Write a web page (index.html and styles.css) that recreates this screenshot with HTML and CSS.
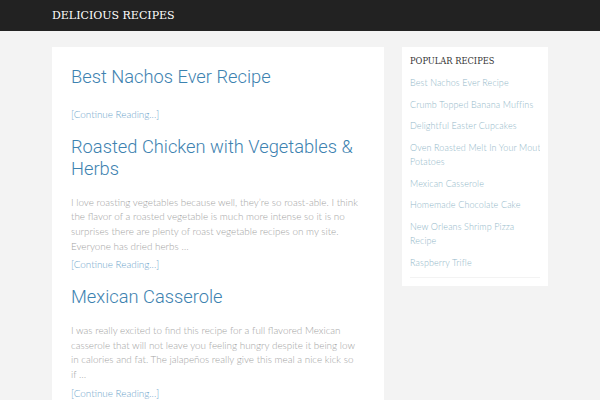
FILE: index.html
```html
<!DOCTYPE html>
<html lang="en">
<head>
    <meta charset="UTF-8">
    <title>Delicious Recipes</title>
    <link rel="stylesheet" href="styles.css">
</head>
<body>
<header class="site-header">
    <div class="wrap">
        <a class="site-title" href="#">DELICIOUS RECIPES</a>
    </div>
</header>

<div class="wrap layout">
    <main class="content">
        <article class="post post-short">
            <h2 class="post-title"><a href="#">Best Nachos Ever Recipe</a></h2>
            <a class="more" href="#">[Continue Reading...]</a>
        </article>

        <article class="post">
            <h2 class="post-title"><a href="#">Roasted Chicken with Vegetables &amp; Herbs</a></h2>
            <p>I love roasting vegetables because well, they&rsquo;re so roast-able. I think the flavor of a roasted vegetable is much more intense so it is no surprises there are plenty of roast vegetable recipes on my site. Everyone has dried herbs &hellip;</p>
            <a class="more" href="#">[Continue Reading...]</a>
        </article>

        <article class="post">
            <h2 class="post-title"><a href="#">Mexican Casserole</a></h2>
            <p>I was really excited to find this recipe for a full flavored Mexican casserole that will not leave you feeling hungry despite it being low in calories and fat. The jalapeños really give this meal a nice kick so if &hellip;</p>
            <a class="more" href="#">[Continue Reading...]</a>
        </article>
    </main>

    <aside class="sidebar">
        <h3 class="widget-title">POPULAR RECIPES</h3>
        <ul class="widget-list">
            <li><a href="#">Best Nachos Ever Recipe</a></li>
            <li><a href="#">Crumb Topped Banana Muffins</a></li>
            <li><a href="#">Delightful Easter Cupcakes</a></li>
            <li><a href="#"><span class="nowrap">Oven Roasted Melt In Your Mouth</span> Potatoes</a></li>
            <li><a href="#">Mexican Casserole</a></li>
            <li><a href="#">Homemade Chocolate Cake</a></li>
            <li><a href="#">New Orleans Shrimp Pizza Recipe</a></li>
            <li><a href="#">Raspberry Trifle</a></li>
        </ul>
    </aside>
</div>
</body>
</html>
```

FILE: styles.css
```css
body {
    margin: 0;
    background-color: #f3f3f3;
    font-family: 'Lato', 'Open Sans', sans-serif;
    color: #999;
}

a {
    text-decoration: none;
}

.wrap {
    width: 496px;
    margin: 0 auto;
}

.site-header {
    background-color: #222;
    height: 31px;
}

.site-header .wrap {
    display: flex;
    align-items: center;
    height: 100%;
}

.site-title {
    font-family: 'DejaVu Serif', serif;
    font-size: 11px;
    color: #fff;
}

.layout {
    display: flex;
    align-items: flex-start;
    gap: 18px;
    margin-top: 16px;
}

.content {
    flex: 1;
    background-color: #fff;
    padding: 19px 24px 24px 19px;
    display: flex;
    flex-direction: column;
    gap: 14px;
}

.post {
    display: flex;
    flex-direction: column;
}

.post-title {
    margin: 0 0 14px;
    font-family: 'Roboto', sans-serif;
    font-weight: 300;
    font-size: 18.3px;
    line-height: 22.5px;
}

.post-short .post-title {
    margin-bottom: 18px;
}

.post-title a {
    color: #3d82b0;
}

.post p {
    margin: 0 0 4px;
    font-size: 9.9px;
    line-height: 14.7px;
    font-weight: 300;
    color: #a3a3a3;
}

.more {
    font-size: 9.9px;
    line-height: 15px;
    font-weight: 300;
    color: #6fa6cc;
}

.sidebar {
    width: 146px;
    background-color: #fff;
    padding: 8px 8px 8px 8px;
    box-sizing: border-box;
}

.widget-title {
    margin: 0 0 9px;
    font-family: 'DejaVu Serif', serif;
    font-weight: normal;
    font-size: 8.3px;
    line-height: 12px;
    color: #333;
}

.widget-list {
    list-style: none;
    margin: 0;
    padding: 0;
    display: flex;
    flex-direction: column;
    gap: 7px;
}

.widget-list li {
    font-size: 9px;
    line-height: 14.5px;
    font-weight: 300;
    letter-spacing: 0.1px;
    overflow: hidden;
}

.widget-list li:last-child {
    padding-bottom: 7px;
    border-bottom: 1px solid #f3f3f3;
}

.widget-list a {
    color: #93b8c9;
}

.nowrap {
    white-space: nowrap;
}
```
